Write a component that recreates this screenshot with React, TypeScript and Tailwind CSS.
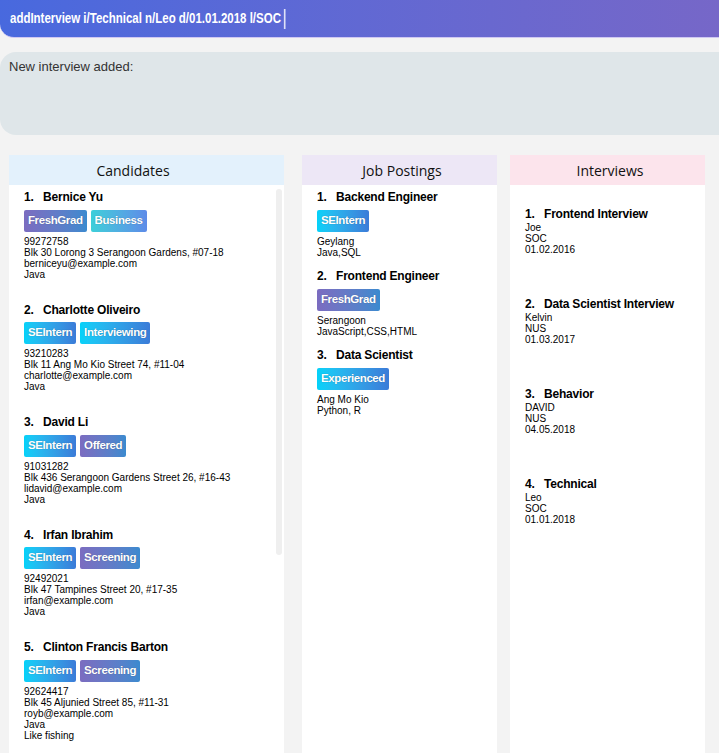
import React from 'react';

type TagKind = 'purple' | 'cyan' | 'teal';

interface Tag {
  label: string;
  kind: TagKind;
}

interface Candidate {
  name: string;
  tags: Tag[];
  lines: string[];
}

interface Job {
  title: string;
  tag: Tag;
  lines: string[];
}

interface Interview {
  title: string;
  lines: string[];
}

const tagClass: Record<TagKind, string> = {
  purple: 'bg-linear-to-r from-[#7b6cc0] to-[#3a8acf]',
  cyan: 'bg-linear-to-r from-[#02d2f9] to-[#3b7bd8]',
  teal: 'bg-linear-to-r from-[#3ccfd9] to-[#5d8be8]',
};

const candidates: Candidate[] = [
  {
    name: 'Bernice Yu',
    tags: [{ label: 'FreshGrad', kind: 'purple' }, { label: 'Business', kind: 'teal' }],
    lines: ['99272758', 'Blk 30 Lorong 3 Serangoon Gardens, #07-18', 'berniceyu@example.com', 'Java'],
  },
  {
    name: 'Charlotte Oliveiro',
    tags: [{ label: 'SEIntern', kind: 'cyan' }, { label: 'Interviewing', kind: 'cyan' }],
    lines: ['93210283', 'Blk 11 Ang Mo Kio Street 74, #11-04', 'charlotte@example.com', 'Java'],
  },
  {
    name: 'David Li',
    tags: [{ label: 'SEIntern', kind: 'cyan' }, { label: 'Offered', kind: 'purple' }],
    lines: ['91031282', 'Blk 436 Serangoon Gardens Street 26, #16-43', 'lidavid@example.com', 'Java'],
  },
  {
    name: 'Irfan Ibrahim',
    tags: [{ label: 'SEIntern', kind: 'cyan' }, { label: 'Screening', kind: 'purple' }],
    lines: ['92492021', 'Blk 47 Tampines Street 20, #17-35', 'irfan@example.com', 'Java'],
  },
  {
    name: 'Clinton Francis Barton',
    tags: [{ label: 'SEIntern', kind: 'cyan' }, { label: 'Screening', kind: 'purple' }],
    lines: ['92624417', 'Blk 45 Aljunied Street 85, #11-31', 'royb@example.com', 'Java', 'Like fishing'],
  },
];

const jobs: Job[] = [
  { title: 'Backend Engineer', tag: { label: 'SEIntern', kind: 'cyan' }, lines: ['Geylang', 'Java,SQL'] },
  { title: 'Frontend Engineer', tag: { label: 'FreshGrad', kind: 'purple' }, lines: ['Serangoon', 'JavaScript,CSS,HTML'] },
  { title: 'Data Scientist', tag: { label: 'Experienced', kind: 'cyan' }, lines: ['Ang Mo Kio', 'Python, R'] },
];

const interviews: Interview[] = [
  { title: 'Frontend Interview', lines: ['Joe', 'SOC', '01.02.2016'] },
  { title: 'Data Scientist Interview', lines: ['Kelvin', 'NUS', '01.03.2017'] },
  { title: 'Behavior', lines: ['DAVID', 'NUS', '04.05.2018'] },
  { title: 'Technical', lines: ['Leo', 'SOC', '01.01.2018'] },
];

const Pill: React.FC<{ tag: Tag }> = ({ tag }) => (
  <span
    className={`${tagClass[tag.kind]} h-[22px] px-[4px] rounded-[2px] flex items-center text-white font-bold text-[11.5px] tracking-[-0.4px] [text-shadow:0_0_1px_rgba(0,0,0,0.35)]`}
  >
    {tag.label}
  </span>
);

const CardTitle: React.FC<{ index: number; title: string }> = ({ index, title }) => (
  <div className="h-[16px] flex items-center font-bold text-[12px] text-black tracking-[-0.2px]">
    <span className="w-[19px]">{index}.</span>
    <span>{title}</span>
  </div>
);

const Lines: React.FC<{ lines: string[] }> = ({ lines }) => (
  <div className="text-[10px] leading-[11px] text-black">
    {lines.map((l, i) => (
      <div key={i}>{l}</div>
    ))}
  </div>
);

const ColumnHeader: React.FC<{ title: string; bg: string; pad: string }> = ({ title, bg, pad }) => (
  <div className={`${bg} ${pad} h-[30px] flex items-center justify-center text-[14px] text-[#111] font-['Open_Sans',sans-serif]`}>
    {title}
  </div>
);

export default function App() {
  return (
    <div className="w-[719px] h-[753px] bg-[#f3f3f3] overflow-hidden flex flex-col font-['Liberation_Sans',Arial,sans-serif]">
      {/* command box */}
      <div className="h-[38px] shrink-0 rounded-bl-[14px] bg-linear-to-r from-[#4869de] to-[#7667c8] border-b border-[#cfc8f2] flex items-center pl-[10px]">
        <div className="flex items-center origin-left scale-x-[0.82] whitespace-nowrap">
          <span className="text-white font-bold text-[14px]">
            addInterview i/Technical n/Leo d/01.01.2018 l/SOC
          </span>
          <span className="ml-[4px] w-[1.5px] h-[20px] bg-white/80" />
        </div>
      </div>

      {/* result box */}
      <div className="mt-[14px] h-[83px] shrink-0 rounded-l-[16px] bg-[#dfe6e9] pl-[9px] pt-[5px] text-[13px] text-[#333]">
        New interview added:
      </div>

      {/* lists */}
      <div className="mt-[20px] flex flex-1 min-h-0 pl-[9px]">
        {/* candidates */}
        <div className="w-[275px] flex flex-col bg-white relative">
          <ColumnHeader title="Candidates" bg="bg-[#e3f1fc]" pad="pr-[27px]" />
          <div className="flex flex-col gap-[18px] pl-[15px]">
            {candidates.map((c, i) => (
              <div key={i} className="flex flex-col pt-[4px]">
                <CardTitle index={i + 1} title={c.name} />
                <div className="flex gap-[4px] mt-[4.5px]">
                  {c.tags.map((t, j) => (
                    <Pill key={j} tag={t} />
                  ))}
                </div>
                <div className="mt-[4px]">
                  <Lines lines={c.lines} />
                </div>
              </div>
            ))}
          </div>
          <div className="absolute left-[267px] top-[34px] w-[6px] h-[366px] rounded-full bg-[#efefef]" />
        </div>

        {/* job postings */}
        <div className="w-[195px] ml-[18px] flex flex-col bg-white">
          <ColumnHeader title="Job Postings" bg="bg-[#ede7f6]" pad="pl-[5px]" />
          <div className="flex flex-col gap-[6.5px] pl-[15px]">
            {jobs.map((j, i) => (
              <div key={i} className="flex flex-col pt-[4px]">
                <CardTitle index={i + 1} title={j.title} />
                <div className="flex mt-[4.5px]">
                  <Pill tag={j.tag} />
                </div>
                <div className="mt-[4px]">
                  <Lines lines={j.lines} />
                </div>
              </div>
            ))}
          </div>
        </div>

        {/* interviews */}
        <div className="w-[195px] ml-[13px] flex flex-col bg-white">
          <ColumnHeader title="Interviews" bg="bg-[#fce4ec]" pad="pl-[5px]" />
          <div className="flex flex-col pl-[15px]">
            {interviews.map((iv, i) => (
              <div key={i} className="h-[90px] pt-[20.5px] flex flex-col">
                <CardTitle index={i + 1} title={iv.title} />
                <Lines lines={iv.lines} />
              </div>
            ))}
          </div>
        </div>
      </div>
    </div>
  );
}
